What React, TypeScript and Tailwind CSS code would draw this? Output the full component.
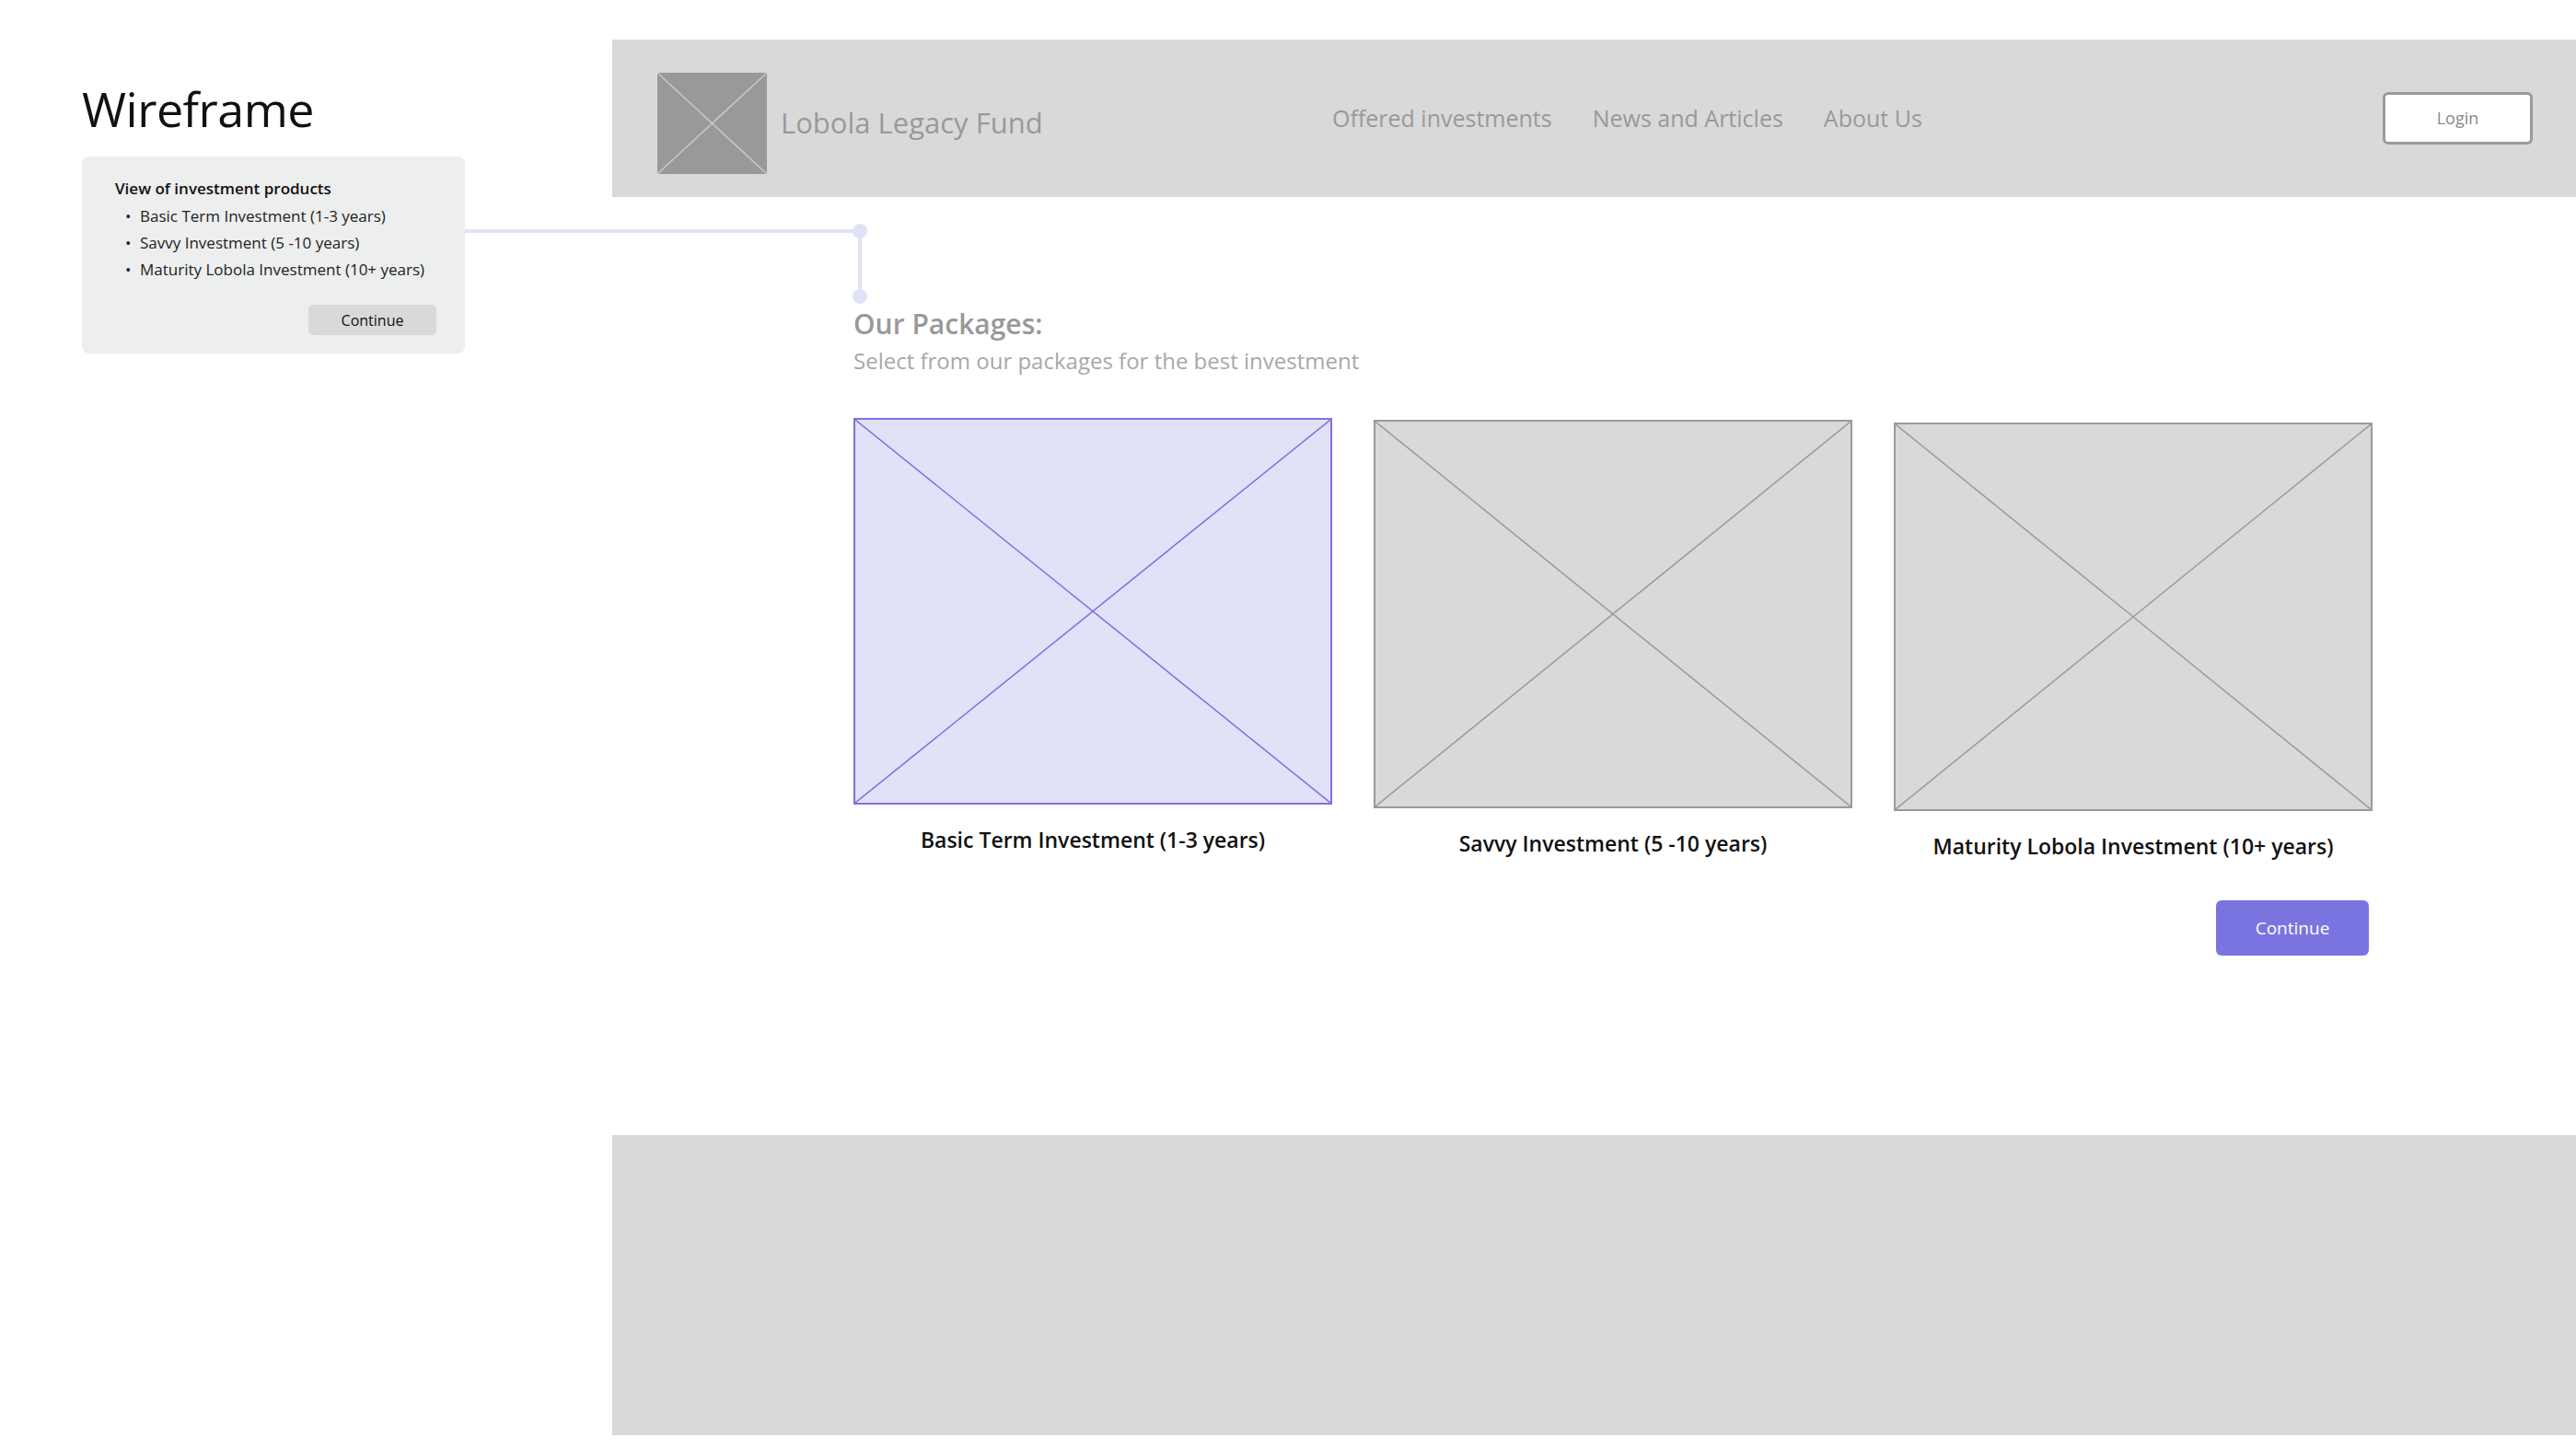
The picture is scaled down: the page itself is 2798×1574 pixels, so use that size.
import React from "react";

const font = { fontFamily: '"Open Sans", "Liberation Sans", sans-serif' };

function Placeholder({ stroke, className }: { stroke: string; className: string }) {
   return (
      <div className={className}>
         <svg className="w-full h-full block" viewBox="0 0 100 100" preserveAspectRatio="none">
            <line x1="0" y1="0" x2="100" y2="100" stroke={stroke} strokeWidth="1.5" vectorEffect="non-scaling-stroke" />
            <line x1="100" y1="0" x2="0" y2="100" stroke={stroke} strokeWidth="1.5" vectorEffect="non-scaling-stroke" />
         </svg>
      </div>
   );
}

const packages = [
   { label: "Basic Term Investment (1-3 years)", active: true, offset: "mt-0" },
   { label: "Savvy Investment (5 -10 years)", active: false, offset: "mt-[2px]" },
   { label: "Maturity Lobola Investment (10+ years)", active: false, offset: "mt-[5px]" },
];

export default function App() {
   return (
      <div className="relative w-[2798px] h-[1574px] bg-white flex overflow-hidden" style={font}>
         {/* left: wireframe note */}
         <div className="w-[665px] shrink-0 pl-[89px] pt-[88px]">
            <h1 className="text-[52px] leading-[60px] font-medium text-[#111] tracking-[-0.5px]">Wireframe</h1>
            <div className="mt-[22px] w-[416px] h-[214px] bg-[#edeeee] rounded-[8px] pl-[36px] pr-[31px] pt-[23px] pb-[20px] flex flex-col">
               <p className="text-[17px] leading-[24px] font-semibold text-[#111]">View of investment products</p>
               <ul className="mt-[3px] flex flex-col text-[17px] leading-[29px] text-[#222]">
                  <li className="flex items-center"><span className="w-[27px] pl-[11px]">•</span>Basic Term Investment (1-3 years)</li>
                  <li className="flex items-center"><span className="w-[27px] pl-[11px]">•</span>Savvy Investment (5 -10 years)</li>
                  <li className="flex items-center"><span className="w-[27px] pl-[11px]">•</span>Maturity Lobola Investment (10+ years)</li>
               </ul>
               <div className="mt-auto flex justify-end">
                  <button className="w-[139px] h-[33px] bg-[#d9d9d9] rounded-[5px] text-[16px] font-medium text-[#111]">
                     Continue
                  </button>
               </div>
            </div>
         </div>

         {/* right: page mockup */}
         <div className="flex-1 flex flex-col">
            <header className="mt-[43px] h-[171px] bg-[#d9d9d9] flex items-center pl-[49px] pr-[47px]">
               <div className="w-[733px] flex items-center mt-[10px]">
                  <Placeholder stroke="#c8c8c8" className="w-[119px] h-[110px] bg-[#999999]" />
                  <span className="ml-[15px] text-[31px] text-[#999999]">Lobola Legacy Fund</span>
               </div>
               <nav className="flex gap-[44px] text-[25px] text-[#999999]">
                  <span>Offered investments</span>
                  <span>News and Articles</span>
                  <span>About Us</span>
               </nav>
               <button className="ml-auto w-[163px] h-[57px] bg-white border-[3px] border-[#9a9a9a] rounded-[6px] text-[18px] text-[#8a8a8a]">
                  Login
               </button>
            </header>

            <main className="pl-[262px] pt-[118px]">
               <h2 className="text-[30px] leading-[40px] font-semibold text-[#999999]">Our Packages:</h2>
               <p className="mt-[4px] text-[24px] leading-[32px] text-[#a8a8a8]">Select from our packages for the best investment</p>

               <div className="mt-[46px] w-[1650px] flex gap-[45px] items-start">
                  {packages.map((p) => (
                     <div key={p.label} className={`w-[520px] flex flex-col items-center ${p.offset}`}>
                        <Placeholder
                           stroke={p.active ? "#7b72e0" : "#9a9a9a"}
                           className={
                              p.active
                                 ? "w-[520px] h-[420px] bg-[#e1e1f8] border-[2px] border-[#7b72e0]"
                                 : "w-[520px] h-[422px] bg-[#d9d9d9] border-[2px] border-[#9a9a9a]"
                           }
                        />
                        <span className="mt-[22px] text-[23px] leading-[32px] font-semibold text-[#111]">{p.label}</span>
                     </div>
                  ))}
               </div>

               <div className="w-[1646px] flex justify-end mt-[43px]">
                  <button className="w-[166px] h-[60px] bg-[#7a74e0] rounded-[6px] text-[19px] text-white">Continue</button>
               </div>
            </main>

            <footer className="mt-auto mb-[15px] h-[326px] bg-[#d9d9d9]" />
         </div>

         {/* connector annotation */}
         <svg className="absolute left-0 top-0 pointer-events-none" width="2798" height="1574">
            <line x1="505" y1="251" x2="934" y2="251" stroke="#e2e2f7" strokeWidth="4" />
            <line x1="934" y1="251" x2="934" y2="322" stroke="#e2e2f7" strokeWidth="4" />
            <circle cx="934" cy="251" r="8" fill="#e2e2f7" />
            <circle cx="934" cy="322" r="8" fill="#e2e2f7" />
         </svg>
      </div>
   );
}
